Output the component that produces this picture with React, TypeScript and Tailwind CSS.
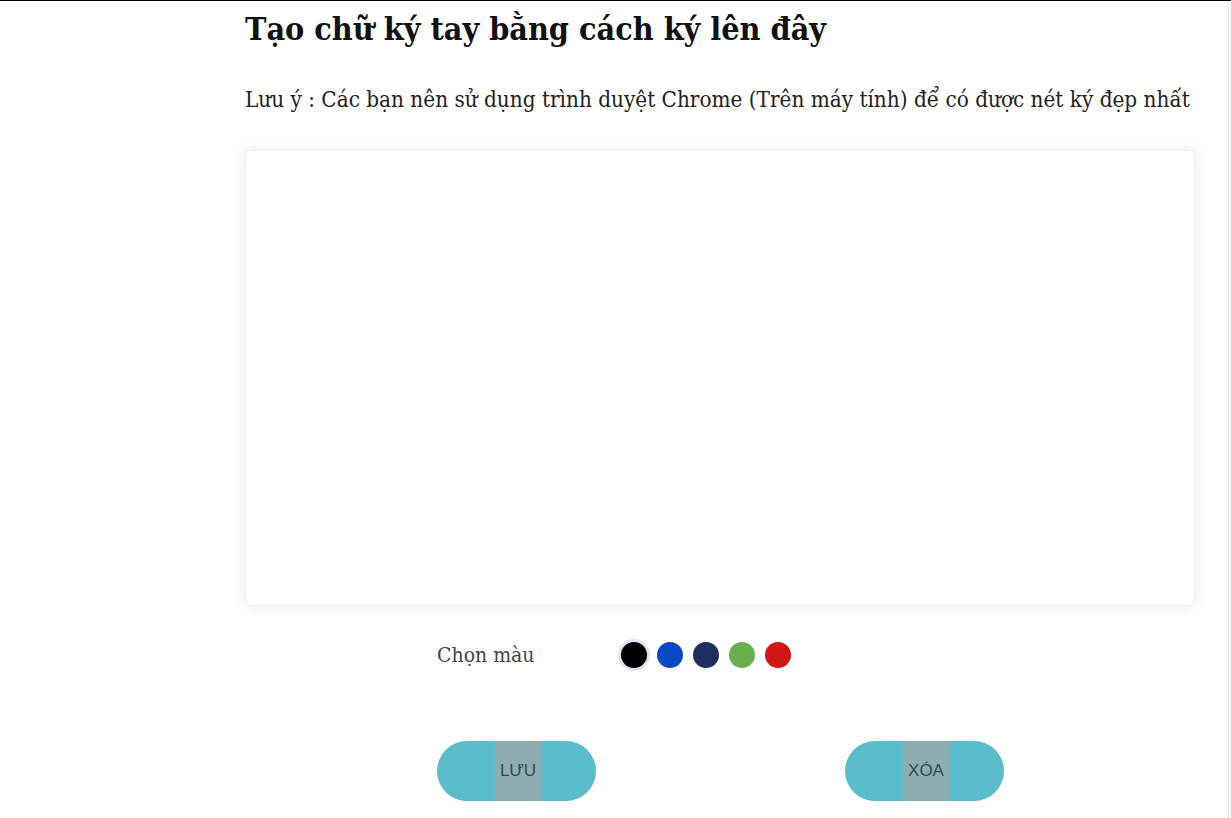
import { useState } from 'react';

const colors = ['#000000', '#0b49c4', '#1c2f5e', '#6aaf4f', '#d01616'];

const serif = { fontFamily: '"DejaVu Serif Condensed", "DejaVu Serif", serif' };

const SignaturePage = () => {
    const [active, setActive] = useState(0);

    return (
        <div className="relative w-[1231px] h-[818px] bg-white overflow-hidden border-t border-black" style={serif}>
            {/* thanh cuộn bên phải */}
            <div className="absolute right-[2px] top-0 bottom-0 w-px bg-[#e4e4e4]" />

            <div className="pl-[245px] pr-[36px]">
                <h1 className="pt-[9px] text-[32px] leading-[38px] font-bold text-[#111]">
                    Tạo chữ ký tay bằng cách ký lên đây
                </h1>
                <p className="mt-[38px] text-[22.3px] leading-[26px] text-[#222] whitespace-nowrap">
                    Lưu ý : Các bạn nên sử dụng trình duyệt Chrome (Trên máy tính) để có được nét ký đẹp nhất
                </p>

                {/* khung ký */}
                <div className="mt-[38px] w-[950px] h-[456px] bg-white rounded-[5px] border border-[#f0f0f0] shadow-[0_0_14px_rgba(0,0,0,0.09)]" />

                <div className="mt-[36px] h-[26px] flex items-center pl-[192px]">
                    <span className="w-[184px] text-[21px] leading-[26px] text-[#444]">Chọn màu</span>
                    <div className="flex gap-[10px]">
                        {colors.map((c, i) => (
                            <button
                                key={c}
                                onClick={() => setActive(i)}
                                className={`w-[26px] h-[26px] rounded-full ${active === i ? 'ring-[3px] ring-[#dfe3ee]' : ''}`}
                                style={{ backgroundColor: c }}
                            />
                        ))}
                    </div>
                </div>

                <div className="mt-[73px] flex pl-[192px] gap-[249px]">
                    {['LƯU', 'XÓA'].map(t => (
                        <button
                            key={t}
                            className="w-[159px] h-[60px] rounded-full bg-[#5bbccc] flex items-center justify-center"
                        >
                            <span className="h-full w-[47px] ml-[3px] bg-[#8fadb1] flex items-center justify-center text-[17px] text-[#2c4a55]" style={{ fontFamily: '"Liberation Sans", Arial, sans-serif' }}>
                                {t}
                            </span>
                        </button>
                    ))}
                </div>
            </div>
        </div>
    );
};

export default function App() {
    return <SignaturePage />;
}
